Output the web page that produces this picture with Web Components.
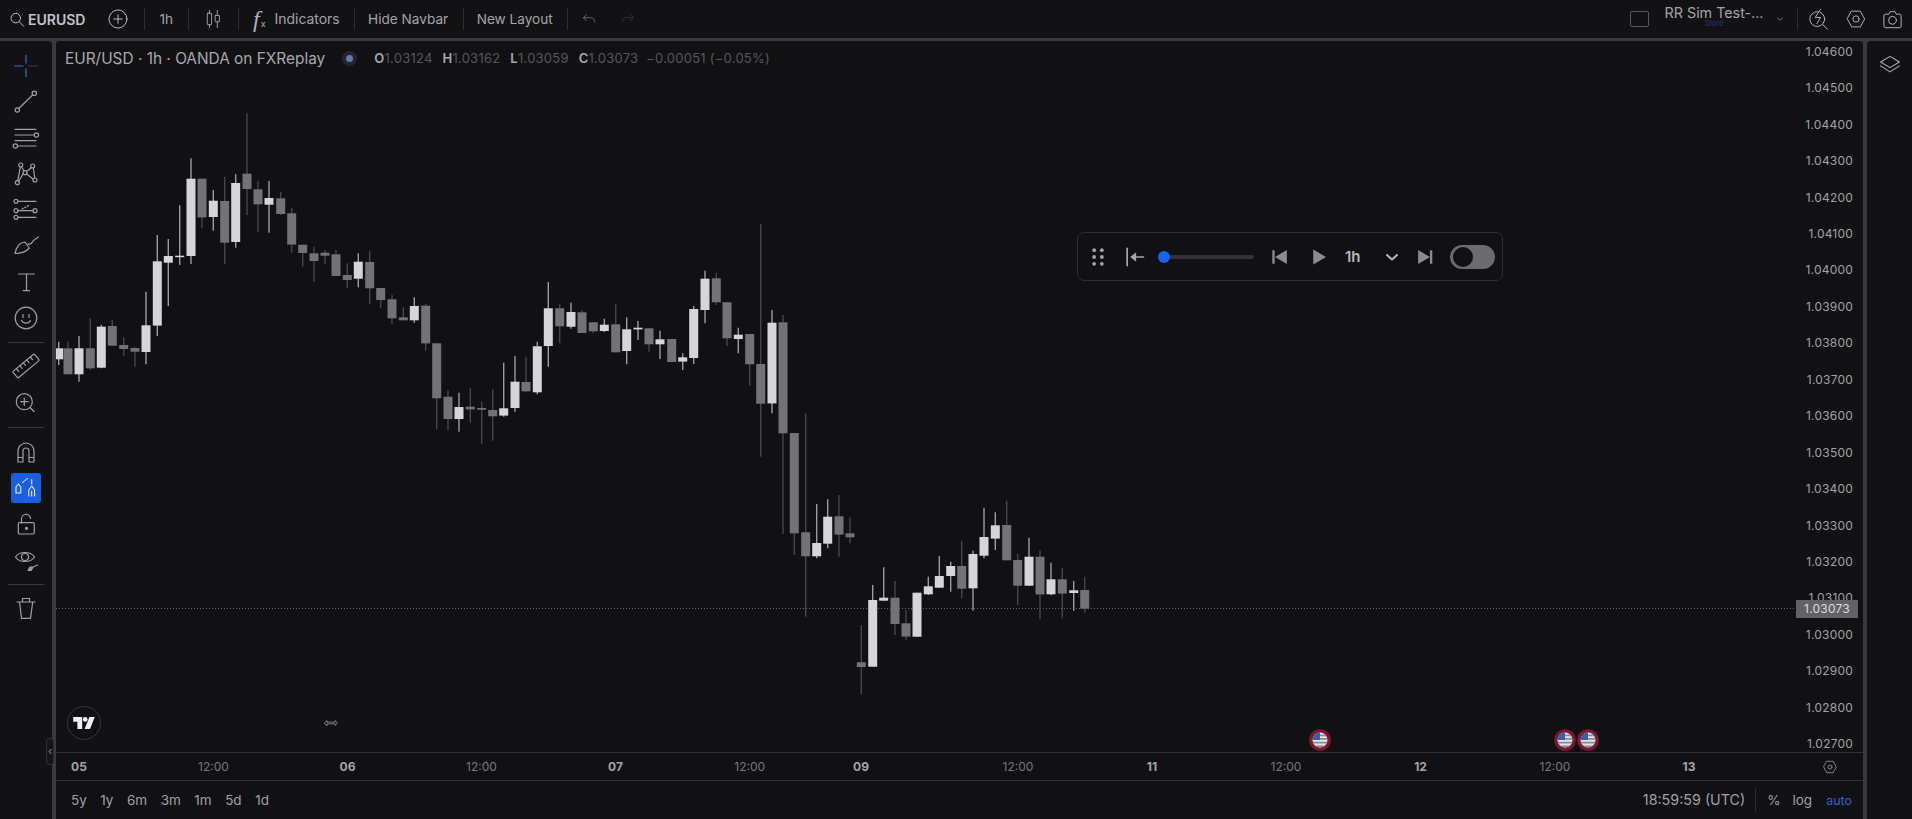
<!DOCTYPE html>
<html>
<head>
<meta charset="utf-8">
<title>EURUSD replay</title>
<style>
  html, body { margin: 0; height: 100%; background: #3a3a3c; overflow: hidden; }
  body { font-family: Inter, "Liberation Sans", sans-serif; color: #a8a8ac; }
</style>
</head>
<body>
<app-shell></app-shell>

<script>
// all icons are drawn on a 28x28 box, stroke comes from ui-icon
const ICONS = {
  search: '<circle cx="11.5" cy="12" r="7"/><path d="M16.600 17.200l6.400 6.800"/>',
  plus: '<circle cx="14" cy="14" r="11.500"/><path d="M14 8.500v11M8.500 14h11"/>',
  candles: '<path d="M9 2v4M9 22v4M20 2v7M20 18v8"/><rect x="6" y="6" width="6" height="16" rx=".6"/><rect x="17" y="9" width="6" height="9" rx=".6"/>',
  undo: '<path d="M9 6l-5 5 5 5M4 11h12c4 0 6.500 2.500 6.500 7"/>',
  redo: '<path d="M19 6l5 5-5 5M24 11H12c-4 0-6.500 2.500-6.500 7"/>',
  chevron: '<path d="M9 12l5 4.500 5-4.500"/>',
  bolt: '<circle cx="12.500" cy="13.500" r="9"/><path d="M19 20l6 6"/><path d="M16.500 1.500L10 11.500h6.500L12 19" fill="#121214"/>',
  hex: '<path d="M8.500 4h11L25 14l-5.500 10h-11L3 14z"/><circle cx="14" cy="14" r="4"/>',
  camera: '<path d="M3.500 9.500a2 2 0 0 1 2-2h4l1.500-3h6l1.500 3h4a2 2 0 0 1 2 2V22a2 2 0 0 1-2 2h-17a2 2 0 0 1-2-2z"/><circle cx="14" cy="15" r="4.800"/>',
  layers: '<path d="M14 4l11 6.500-11 6.500L3 10.500z"/><path d="M3 15l11 7 11-7"/>',
  line: '<circle cx="5.300" cy="22" r="2.200"/><circle cx="22.300" cy="5.300" r="2.200"/><path d="M7 20.300L20.600 7"/>',
  fib: '<path d="M3 5.300h21M3 11h19M3 16.600h21M5.600 22H24"/><circle cx="24.400" cy="11" r="2.200"/><circle cx="3.300" cy="22" r="2.200"/>',
  pattern: '<path d="M5.800 20.600L8.300 7.100M9.600 7L12 11M14.700 11.300l5-3.700M21.300 8l1.500 10M21 19l-6.300-5M11 14L7 20.800"/><circle cx="8.700" cy="5" r="2"/><circle cx="20.700" cy="6" r="2"/><circle cx="5.300" cy="22.700" r="2"/><circle cx="23" cy="20" r="2"/><circle cx="13" cy="12.700" r="2"/>',
  forecast: '<path d="M6 5.300h18M6 14.700h15M6 21.300h18"/><circle cx="4" cy="5.300" r="2"/><circle cx="4" cy="14.700" r="2"/><circle cx="4" cy="21.300" r="2"/><circle cx="23" cy="14.700" r="2"/><path d="M10 13l8-4" stroke-dasharray="1.500 1.500"/>',
  brush: '<path d="M3 21.500C4 15 8 10 13 10l4.300 6C14 20 8 21.500 3 21.500z"/><path d="M16 12c3 1 4-1 5-3s4-2 5.300-4"/>',
  text: '<path d="M6.500 6h15.800M14.500 6v16.700M11.300 22.700h6.200"/>',
  smile: '<circle cx="14" cy="14" r="10.800"/><path d="M11 10.500v3M17 10.500v3M9.500 16.500c2 3.500 7 3.500 9 0"/>',
  ruler: '<g transform="rotate(-40 14 14)"><rect x="0" y="9.800" width="28" height="8.400" rx="1"/><path d="M5 9.800v3.500M9.500 9.800v3.500M14 9.800v3.500M18.500 9.800v3.500M23 9.800v3.500"/></g>',
  zoom: '<circle cx="12.300" cy="13.700" r="8"/><path d="M18 19.500l4 4M12.300 10v7.400M8.600 13.700H16"/>',
  magnet: '<path d="M6 24V13a8 8 0 0 1 16 0v11h-5V13a3 3 0 0 0-6 0v11zM6 19.500h5M17 19.500h5"/>',
  drawlock: '<path d="M4 19v-6l2.400-3 2.400 3v6z"/><path d="M10.500 8.500l5-4" stroke-dasharray="1.500 1.500"/><path d="M19.700 5.500V10M16.800 22v-6l2.900-4 2.900 4v6M19.700 17v5"/>',
  lock: '<rect x="6.300" y="12.700" width="16" height="11.300" rx="1.500"/><path d="M9.500 12.700V9.500a4.500 4.500 0 0 1 9-1"/><circle cx="14.500" cy="18.300" r="1" fill="currentColor"/>',
  eye: '<path d="M3.500 11C7 5 19 5 22.500 11 19 17 7 17 3.500 11z"/><circle cx="13" cy="11" r="3.500"/><path d="M16 24.500l2-3.500h3l-1.800 3.500zM21 21l4.500-2" fill="currentColor"/>',
  trash: '<path d="M5 8h18M10.500 7.700V4.500h7v3.200M7.500 8l2 16.300h9L20.700 8"/>',
  gear: '<path d="M8.500 4h11L25 14l-5.500 10h-11L3 14z"/><circle cx="14" cy="14" r="3.500"/>',
  grip: '<g fill="currentColor" stroke="none"><circle cx="9.500" cy="6" r="2.200"/><circle cx="18.500" cy="6" r="2.200"/><circle cx="9.500" cy="14" r="2.200"/><circle cx="18.500" cy="14" r="2.200"/><circle cx="9.500" cy="22" r="2.200"/><circle cx="18.500" cy="22" r="2.200"/></g>',
  tostart: '<path d="M6 4v20" stroke-width="2"/><path d="M12 14h13" stroke-width="2"/><path d="M16.500 8.500v11L9.500 14z" fill="currentColor" stroke="none"/>',
  prev: '<path d="M5.500 5.500h3v17h-3zM24 5v18L9 14z" fill="currentColor" stroke="none"/>',
  play: '<path d="M7 4v20l17-10z" fill="currentColor" stroke="none"/>',
  next: '<path d="M22 5.500h-3v17h3zM4 5v18l15-9z" fill="currentColor" stroke="none"/>',
  swap: '<path d="M2.500 14L7 9.800V12.500h14V9.800L25.500 14 21 18.200V15.500H7v2.700z"/>'
};

class UiIcon extends HTMLElement {
  connectedCallback() {
    const size = this.getAttribute('size') || 28;
    const sw = this.getAttribute('sw') || 1.2;
    this.attachShadow({mode: 'open'}).innerHTML = `
      <style>:host{display:inline-flex;flex:none;line-height:0}</style>
      <svg width="${size}" height="${size}" viewBox="0 0 28 28" fill="none" stroke="currentColor" stroke-width="${sw}" stroke-linecap="round" stroke-linejoin="round">${ICONS[this.getAttribute('name')]}</svg>`;
  }
}
customElements.define('ui-icon', UiIcon);

const topTpl = document.createElement('template');
topTpl.innerHTML = `
  <style>
    :host{display:flex;align-items:center;justify-content:space-between;background:#121214;font-size:13.600px;color:#a4a4a8;grid-column:1/-1}
    .group{display:flex;align-items:center;height:100%}
    .seg{display:flex;align-items:center;padding:0 14.500px;height:22px;border-right:1px solid #2c2c2e;white-space:nowrap}
    .seg:last-child{border-right:0}
    .tight{padding-left:13px}
    .first{padding:0 14.500px 0 8px;gap:1px;color:#c4c4c8;font-weight:600;font-size:14px}
    .fx{font:italic 24px "Liberation Serif",serif;color:#b0b0b4;margin-right:9px;display:flex;align-items:flex-end;line-height:20px}
    .fx small{font:normal 9px Inter,sans-serif;margin-left:1px}
    .ind{font-size:13.900px}
    .dim{color:#3a3a3d}
    .sim{display:flex;flex-direction:column;align-items:center;margin:0 7.600px 0 14px;line-height:15px;width:102px;position:relative;top:-3px}
    .sim b{font-weight:400;white-space:nowrap;font-size:14.300px}
    .sim i{font:normal 7.500px Inter,sans-serif;color:#1f3d80;line-height:7px}
    .check{width:17px;height:14px;border:1.500px solid #5a5a5c;border-radius:2px}
    .rsep{width:1px;height:22px;background:#2c2c2e;margin:0 9px 0 10.400px}
    .right ui-icon{color:#b4b4b8}
  </style>
  <div class="group">
    <div class="seg first"><ui-icon name="search" size="19" sw="1.400"></ui-icon><span>EURUSD</span>
      <ui-icon name="plus" size="22" style="margin-left:21px"></ui-icon></div>
    <div class="seg">1h</div>
    <div class="seg"><ui-icon name="candles" size="20" sw="1.300"></ui-icon></div>
    <div class="seg"><span class="fx">f<small>x</small></span><span class="ind">Indicators</span></div>
    <div class="seg tight">Hide Navbar</div>
    <div class="seg tight">New Layout</div>
    <div class="seg" style="padding-left:12.500px"><ui-icon name="undo" size="17" style="color:#808084"></ui-icon><ui-icon class="dim" name="redo" size="17" style="margin-left:21px"></ui-icon></div>
  </div>
  <div class="group right">
    <div class="check"></div>
    <div class="sim"><b>RR Sim Test-...</b><i>Store</i></div>
    <ui-icon name="chevron" size="14"></ui-icon>
    <div class="rsep"></div>
    <ui-icon name="bolt" size="23"></ui-icon>
    <ui-icon name="hex" size="22" style="margin-left:15px"></ui-icon>
    <ui-icon name="camera" size="23" style="margin:0 8px 0 14px"></ui-icon>
  </div>`;
class TopBar extends HTMLElement {
  constructor() {
    super();
    this.attachShadow({mode: 'open'}).appendChild(topTpl.content.cloneNode(true));
  }
}
customElements.define('top-bar', TopBar);

// left drawing tools, "hr" items are the thin separators
class ToolRail extends HTMLElement {
  constructor() {
    super();
    const tools = ['cross','line','fib','pattern','forecast','brush','text','smile','hr','ruler','zoom','hr2','magnet','drawlock','lock','eye','hr','trash'];
    const items = tools.map(t => {
      if (t === 'hr') return '<div class="hr"></div>';
      if (t === 'hr2') return '<div class="hr tall"></div>';
      if (t === 'cross') return `<div class="btn"><svg width="28" height="28" viewBox="0 0 28 28" fill="none" stroke-width="1.300">
        <path d="M14 3v8.500M14 16.500V25" stroke="#2d69c4"/><path d="M2 14h9.500" stroke="#2a5a9e"/><path d="M16.500 14H26" stroke="#2c3440"/></svg></div>`;
      if (t === 'drawlock') return '<div class="btn active"><ui-icon name="drawlock" size="28" sw="1.100"></ui-icon></div>';
      return `<div class="btn"><ui-icon name="${t}"></ui-icon></div>`;
    }).join('');
    this.attachShadow({mode: 'open'}).innerHTML = `
      <style>
        :host{display:flex;flex-direction:column;align-items:center;background:#121214;padding-top:7px;color:#a0a0a4;border-top-right-radius:4px;min-height:0}
        .btn{width:52px;height:36px;display:flex;align-items:center;justify-content:center;position:relative}
        .active{color:#e8eefc}
        .active::before{content:"";position:absolute;left:11px;top:3px;width:30px;height:30px;background:#1a5fe0;border-radius:3px}
        .active ui-icon{position:relative}
        .hr{width:36px;height:12px;display:flex;align-items:center}
        .hr::before{content:"";flex:1;height:1px;background:#3a3a3c}
        .tall{height:14px}
      </style>${items}`;
  }
}
customElements.define('tool-rail', ToolRail);

// candles read off the reference: [x, bodyTop, bodyBottom, wickTop, wickBottom, w|g]
// each block has its own origin because it was measured from a 3x crop
const CANDLE_BLOCKS = [
  {ox: 50, oy: 100, rows: [
    [26,745,778,725,795,'w'],[54,745,823,725,823,'g'],[87,745,823,708,845,'w'],[121,745,805,655,810,'g'],
    [154,680,803,675,805,'w'],[187,678,737,660,737,'g'],[221,735,747,712,768,'g'],[255,744,755,742,800,'g'],
    [288,676,756,575,793,'w'],[322,484,677,405,708,'w'],[355,468,488,417,618,'w'],[389,467,470,316,495,'w'],
    [423,236,468,175,492,'w'],[456,236,352,236,385,'g'],[490,302,351,270,392,'w'],[524,303,428,230,492,'g'],
    [557,249,426,223,443,'w'],[591,221,267,40,345,'g'],[624,268,313,242,397,'g'],[657,294,314,243,398,'w'],
    [692,295,342,275,345,'g'],[725,340,434,325,458,'g'],[758,434,459,434,500,'g'],[792,460,483,440,545,'g'],
    [825,458,467,450,492,'g'],[858,463,528,450,528,'g'],[892,525,540,490,565,'g'],[925,485,536,460,562,'w'],
    [959,486,565,452,612,'g'],[992,564,600,564,625,'g'],[1026,598,655,585,672,'g'],[1060,652,661,622,661,'g'],
    [1093,618,661,592,668,'w'],[1127,617,730,612,752,'g'],[1160,730,895,730,988,'g']
  ]},
  {ox: 440, oy: 210, rows: [
    [24,560,627,540,660,'g'],[57,591,627,548,665,'w'],[91,590,598,535,638,'g'],[125,594,599,575,702,'g'],
    [158,600,619,538,692,'g'],[191,595,617,458,620,'w'],[225,515,594,438,605,'w'],[258,516,544,440,546,'g'],
    [292,409,547,395,553,'w'],[325,295,408,216,470,'w'],[359,295,349,283,400,'g'],[393,306,350,278,356,'w'],
    [426,307,369,300,369,'g'],[460,337,364,337,370,'g'],[493,344,363,326,366,'w'],[527,343,427,283,427,'g'],
    [560,358,423,322,463,'w'],[594,353,358,333,390,'w'],[627,355,403,355,425,'g'],[660,388,403,362,447,'w'],
    [695,387,456,387,456,'g'],[728,442,455,430,480,'w'],[761,297,444,288,462,'w'],[795,206,300,182,340,'w'],
    [829,205,277,188,285,'g'],[861,277,385,277,408,'g'],[895,374,387,353,430,'w'],[929,372,463,372,527,'g'],
    [962,462,581,42,740,'g'],[996,338,580,300,610,'w'],[1029,337,670,315,972,'g'],[1063,669,970,669,1035,'g']
  ]},
  {ox: 780, oy: 480, rows: [
    [77,157,229,-200,410,'g'],[110,189,229,72,235,'w'],[143,110,191,58,205,'w'],[177,109,164,45,230,'g'],
    [210,160,172,112,190,'g'],[244,547,561,435,642,'g'],[278,360,560,315,560,'w'],[311,353,362,262,362,'w'],
    [345,353,432,303,465,'g'],[378,430,470,390,480,'g'],[411,338,470,338,470,'w'],[445,319,343,290,345,'w'],
    [478,288,323,228,323,'w'],[512,258,288,245,335,'w'],[545,258,326,182,355,'g'],[579,222,325,212,392,'w'],
    [612,171,227,83,235,'w'],[646,136,176,97,210,'w'],[680,135,241,62,241,'g'],[713,240,317,222,375,'g'],
    [747,230,317,173,317,'w'],[780,230,343,210,418,'g'],[813,298,343,248,346,'w'],[847,298,341,265,415,'g'],
    [881,331,339,303,392,'w'],[914,330,386,290,398,'g']
  ]}
];

class CandleChart extends HTMLElement {
  constructor() {
    super();
    let out = '';
    for (const b of CANDLE_BLOCKS) {
      for (const [x, bt, bb, wt, wb, kind] of b.rows) {
        const cx = (b.ox + x / 3).toFixed(1);
        const y = v => (b.oy + v / 3).toFixed(1);
        const body = kind === 'w' ? '#d6d6da' : '#737377';
        const wick = kind === 'w' ? '#9c9ca0' : '#46464a';
        out += `<line x1="${cx}" x2="${cx}" y1="${y(wt)}" y2="${y(wb)}" stroke="${wick}" stroke-width="1.400"/>`;
        out += `<rect x="${(cx - 4.5).toFixed(1)}" y="${y(bt)}" width="9" height="${Math.max(1.5, (bb - bt) / 3).toFixed(1)}" fill="${body}"/>`;
      }
    }
    this.attachShadow({mode: 'open'}).innerHTML = `
      <style>:host{display:block;position:relative;flex:1;min-width:0;overflow:hidden} svg{display:block;width:100%;height:100%}</style>
      <svg viewBox="56 41 1741 711">
        <line x1="56" x2="1797" y1="608.500" y2="608.500" stroke="#67676b" stroke-dasharray="1 2"/>
        ${out}
      </svg><slot></slot>`;
  }
}
customElements.define('candle-chart', CandleChart);

class PriceAxis extends HTMLElement {
  constructor() {
    super();
    let rows = '';
    for (let i = 0; i < 20; i++) rows += `<div>${(1.046 - i * 0.001).toFixed(5)}</div>`;
    this.attachShadow({mode: 'open'}).innerHTML = `
      <style>
        :host{display:block;width:66px;flex:none;overflow:hidden;font-size:12px;color:#a2a2a6;letter-spacing:.2px}
        .list{margin-top:-7.200px;padding-right:10px;text-align:right}
        .list div{height:36.440px;line-height:36.440px}
      </style><div class="list">${rows}</div>`;
  }
}
customElements.define('price-axis', PriceAxis);

class ReplayBar extends HTMLElement {
  constructor() {
    super();
    this.attachShadow({mode: 'open'}).innerHTML = `
      <style>
        :host{position:absolute;left:1021px;top:191px;width:426px;height:49px;box-sizing:border-box;border:1px solid #2e2e31;border-radius:7px;background:#111114;
          display:flex;align-items:center;color:#8c8c90}
        ui-icon{position:absolute;top:50%;transform:translateY(-50%)}
        .track{position:absolute;left:86px;width:90px;height:4px;top:50%;margin-top:-2px;background:#333336;border-radius:2px}
        .thumb{position:absolute;left:80px;top:50%;margin-top:-6px;width:12px;height:12px;border-radius:50%;background:#1763f0}
        .tf{position:absolute;left:267px;font-size:15px;font-weight:600;color:#b8b8bc}
        .toggle{position:absolute;left:372px;top:50%;margin-top:-12px;width:45px;height:24px;box-sizing:border-box;border-radius:12px;background:#6c6c70;border:2px solid #6c6c70}
        .toggle::before{content:"";position:absolute;left:1px;top:0;width:20px;height:20px;border-radius:50%;background:#111114}
      </style>
      <ui-icon name="grip" size="24" style="left:8px;color:#a4a4a8"></ui-icon>
      <ui-icon name="tostart" size="24" style="left:44px;color:#a4a4a8"></ui-icon>
      <div class="track"></div><div class="thumb"></div>
      <ui-icon name="prev" size="22" style="left:190px"></ui-icon>
      <ui-icon name="play" size="21" style="left:230px"></ui-icon>
      <span class="tf">1h</span>
      <ui-icon name="chevron" size="28" sw="2" style="left:300px;color:#b8b8bc"></ui-icon>
      <ui-icon name="next" size="22" style="left:337px"></ui-icon>
      <div class="toggle"></div>`;
  }
}
customElements.define('replay-bar', ReplayBar);

class EventFlag extends HTMLElement {
  constructor() {
    super();
    this.attachShadow({mode: 'open'}).innerHTML = `
      <style>:host{position:absolute;width:22px;height:22px;line-height:0}</style>
      <svg width="22" height="22" viewBox="0 0 22 22">
        <clipPath id="c"><circle cx="11" cy="11" r="7.500"/></clipPath>
        <circle cx="11" cy="11" r="10.800" fill="#7a1a30"/>
        <g clip-path="url(#c)">
          <rect width="22" height="22" fill="#e4e4e8"/>
          <path d="M0 5.500h22v1.800H0zM0 9h22v1.800H0zM0 12.700h22v1.800H0zM0 16.400h22v1.800H0z" fill="#8a8a94"/>
          <rect x="3" y="3" width="8" height="8" fill="#3a5fa8"/>
        </g>
      </svg>`;
  }
}
customElements.define('event-flag', EventFlag);

const paneTpl = document.createElement('template');
paneTpl.innerHTML = `
  <style>
    :host{display:flex;background:#111114;position:relative;overflow:hidden;min-height:0;border-top-left-radius:4px;border-top-right-radius:4px}
    .legend{position:absolute;left:9px;top:8px;height:18px;display:flex;align-items:center;white-space:nowrap;font-size:13px;color:#56565b;letter-spacing:.25px}
    .title{font-size:15.400px;color:#a8a8ac;margin-right:21px;letter-spacing:0}
    .dot{width:7px;height:7px;border-radius:50%;background:#5b7bb0;box-shadow:0 0 0 4px #26262a;margin-right:21px}
    .legend b{font-weight:600;color:#a8a8ac;margin-left:6px}
    .legend b:first-of-type{margin-left:0}
    .logo{position:absolute;left:11px;top:665px;width:34px;height:34px;box-sizing:border-box;border:1px solid #37373a;border-radius:50%;background:#111114;display:flex;align-items:center;justify-content:center}
    .swap{position:absolute;left:267px;top:674px;color:#b0b0b4}
    .tag{position:absolute;right:5px;top:559px;width:62px;height:18px;background:#626266;color:#dcdce0;font-size:12px;letter-spacing:.2px;line-height:18px;text-align:center}
  </style>
  <candle-chart></candle-chart>
  <price-axis></price-axis>
  <div class="legend">
    <span class="title">EUR/USD · 1h · OANDA on FXReplay</span><span class="dot"></span>
    <b>O</b>1.03124&nbsp;<b>H</b>1.03162&nbsp;<b>L</b>1.03059&nbsp;<b>C</b>1.03073&nbsp;&nbsp;−0.00051&nbsp;(−0.05%)
  </div>
  <replay-bar></replay-bar>
  <div class="logo"><svg width="22" height="12" viewBox="0 0 36 20" fill="#f0f0f2"><path d="M0 0h15v20H7V8H0z"/><circle cx="20" cy="4" r="4"/><path d="M27 0h9l-8 20h-9z"/></svg></div>
  <ui-icon class="swap" name="swap" size="16"></ui-icon>
  <event-flag style="left:1253px;top:688px"></event-flag>
  <event-flag style="left:1498px;top:688px"></event-flag>
  <event-flag style="left:1521px;top:688px"></event-flag>
  <div class="tag">1.03073</div>`;
class ChartPane extends HTMLElement {
  constructor() {
    super();
    this.attachShadow({mode: 'open'}).appendChild(paneTpl.content.cloneNode(true));
  }
}
customElements.define('chart-pane', ChartPane);

class TimeAxis extends HTMLElement {
  constructor() {
    super();
    const ticks = [[79,'05',1],[213.5,'12:00'],[347.5,'06',1],[481.5,'12:00'],[615.5,'07',1],[749.7,'12:00'],[861,'09',1],
      [1018,'12:00'],[1152,'11',1],[1286,'12:00'],[1420.5,'12',1],[1555,'12:00'],[1689,'13',1]];
    const html = ticks.map(([x, t, day]) => `<span class="${day ? 'day' : ''}" style="left:${x - 56}px">${t}</span>`).join('');
    this.attachShadow({mode: 'open'}).innerHTML = `
      <style>
        :host{display:block;position:relative;background:#111114;font-size:12px;color:#77777c}
        span{position:absolute;top:0;line-height:28px;transform:translateX(-50%)}
        .day{font-weight:700;color:#a4a4a8}
        ui-icon{position:absolute;left:1766px;top:6px;color:#b0b0b4}
      </style>${html}<ui-icon name="gear" size="16"></ui-icon>`;
  }
}
customElements.define('time-axis', TimeAxis);

class BottomBar extends HTMLElement {
  constructor() {
    super();
    const ranges = ['5y','1y','6m','3m','1m','5d','1d'].map(r => `<span>${r}</span>`).join('');
    this.attachShadow({mode: 'open'}).innerHTML = `
      <style>
        :host{display:flex;align-items:center;justify-content:space-between;background:#111114;font-size:13.500px;color:#a0a0a4;padding:0 11px 0 15px}
        .ranges{display:flex;gap:13.500px}
        .right{display:flex;align-items:center}
        .clock{padding-right:10px;border-right:1px solid #2c2c2e;line-height:24px;margin-right:11px;font-size:14.300px}
        .auto{color:#3563c7;margin-left:14px;font-size:12.500px}
        .log{margin-left:12px}
      </style>
      <div class="ranges">${ranges}</div>
      <div class="right"><span class="clock">18:59:59 (UTC)</span><span>%</span><span class="log">log</span><span class="auto">auto</span></div>`;
  }
}
customElements.define('bottom-bar', BottomBar);

class SidePanel extends HTMLElement {
  constructor() {
    super();
    this.attachShadow({mode: 'open'}).innerHTML = `
      <style>:host{display:flex;justify-content:center;background:#121214;padding-top:12px;color:#b0b0b4;border-top-left-radius:4px}</style>
      <ui-icon name="layers" size="24"></ui-icon>`;
  }
}
customElements.define('side-panel', SidePanel);

class AppShell extends HTMLElement {
  constructor() {
    super();
    this.attachShadow({mode: 'open'}).innerHTML = `
      <style>
        :host{display:grid;height:819px;grid-template-columns:52px 1fr 45px;grid-template-rows:38px minmax(0,1fr);column-gap:4px;row-gap:3px;position:relative}
        .main{display:grid;grid-template-rows:711px 27px 38px;row-gap:1px;background:#313134;min-width:0;min-height:0}
        .collapse{position:absolute;left:46px;top:738px;width:8px;height:27px;box-sizing:border-box;border:1px solid #303033;border-radius:3px;background:#151517;color:#8c8c90;
          font:11px Inter,sans-serif;line-height:24px;text-align:center}
      </style>
      <top-bar></top-bar>
      <tool-rail></tool-rail>
      <div class="main">
        <chart-pane></chart-pane>
        <time-axis></time-axis>
        <bottom-bar></bottom-bar>
      </div>
      <side-panel></side-panel>
      <div class="collapse">‹</div>`;
  }
}
customElements.define('app-shell', AppShell);
</script>
</body>
</html>
